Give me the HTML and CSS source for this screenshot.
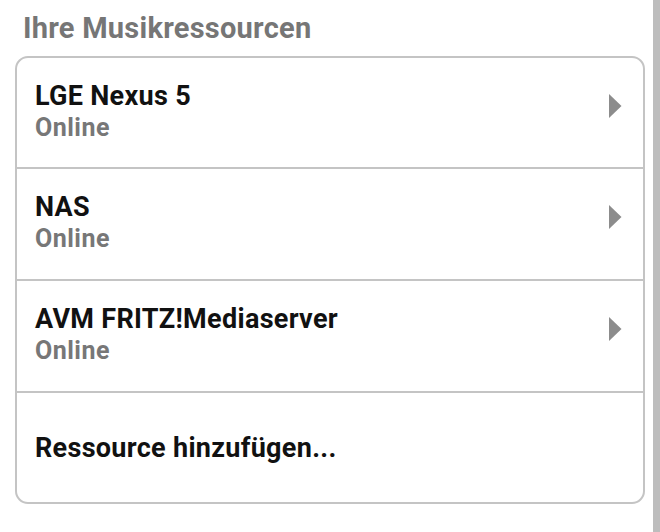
FILE: index.html
```html
<!DOCTYPE html>
<html lang="de">
<head>
<meta charset="utf-8">
<link rel="stylesheet" href="styles.css">
</head>
<body>
<div class="screen">
  <main class="main">
    <h1 class="heading">Ihre Musikressourcen</h1>
    <div class="card">
      <div class="row">
        <div class="info">
          <div class="title">LGE Nexus 5</div>
          <div class="status">Online</div>
        </div>
        <svg class="chev" width="13" height="24" viewBox="0 0 13 24"><polygon points="0,0 12.5,12 0,24" fill="#8c8c8c"/></svg>
      </div>
      <div class="row">
        <div class="info">
          <div class="title">NAS</div>
          <div class="status">Online</div>
        </div>
        <svg class="chev" width="13" height="24" viewBox="0 0 13 24"><polygon points="0,0 12.5,12 0,24" fill="#8c8c8c"/></svg>
      </div>
      <div class="row">
        <div class="info">
          <div class="title">AVM FRITZ!Mediaserver</div>
          <div class="status">Online</div>
        </div>
        <svg class="chev" width="13" height="24" viewBox="0 0 13 24"><polygon points="0,0 12.5,12 0,24" fill="#8c8c8c"/></svg>
      </div>
      <div class="row row-add">
        <div class="title">Ressource hinzufügen...</div>
      </div>
    </div>
  </main>
  <div class="scrollbar"></div>
</div>
</body>
</html>
```
FILE: styles.css
```css
html, body {
  margin: 0;
  padding: 0;
  background: #ffffff;
}
body {
  font-family: Roboto, "Liberation Sans", Arial, sans-serif;
  -webkit-font-smoothing: antialiased;
}
.screen {
  display: flex;
  width: 660px;
  height: 532px;
  overflow: hidden;
}
.main {
  flex: 1;
  display: flex;
  flex-direction: column;
}
.scrollbar {
  width: 7px;
  background: #bdbdbd;
}
.heading {
  margin: 0;
  padding: 11px 0 0 23px;
  height: 56px;
  box-sizing: border-box;
  font-size: 29px;
  line-height: 34px;
  font-weight: 700;
  letter-spacing: 0.25px;
  color: #767676;
}
.card {
  margin: 0 8px 0 15px;
  border: 2px solid #c4c4c4;
  border-radius: 13px;
  background: #fff;
  display: flex;
  flex-direction: column;
}
.row {
  height: 112px;
  box-sizing: border-box;
  padding: 22px 21px 0 18px;
  border-bottom: 2px solid #c4c4c4;
  display: flex;
  align-items: flex-start;
}
.row:first-child {
  height: 111px;
}
.row:last-child {
  border-bottom: none;
  height: 109px;
}
.info {
  flex: 1;
}
.title {
  font-size: 27px;
  line-height: 32px;
  font-weight: 700;
  letter-spacing: 0.3px;
  color: #111;
}
.status {
  font-size: 25px;
  line-height: 32px;
  font-weight: 700;
  letter-spacing: 0.5px;
  color: #777;
}
.chev {
  margin-top: 14px;
  display: block;
}
.row-add {
  padding-top: 0;
  align-items: center;
}
```
